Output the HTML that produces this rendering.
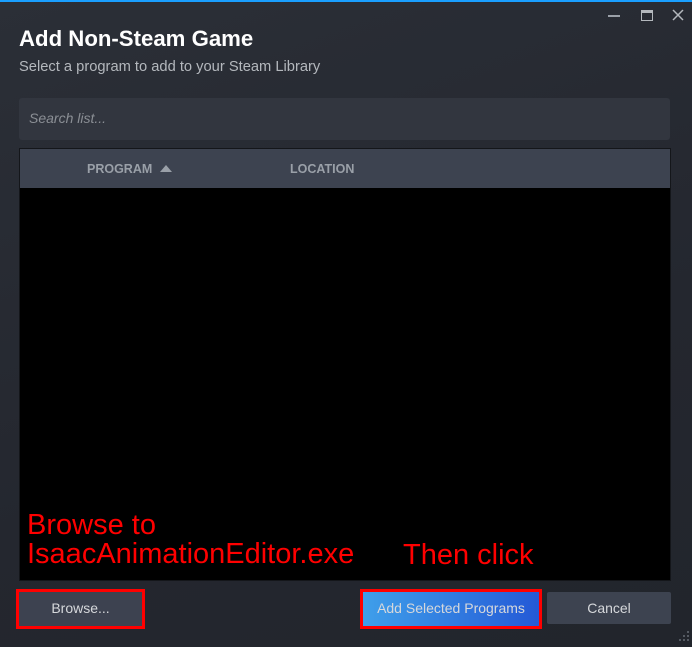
<!DOCTYPE html>
<html><head><meta charset="utf-8"><style>
*{margin:0;padding:0;box-sizing:border-box}
body{width:692px;height:647px;overflow:hidden;background:linear-gradient(160deg,#2b2f37 0%,#24272f 60%,#22252c 100%);font-family:"Liberation Sans",sans-serif;position:relative;color:#fff}
.top{position:absolute;left:0;top:0;width:692px;height:2px;background:#1a9fff}
.abs{position:absolute}
h1{position:absolute;left:19px;top:26px;font-size:22.2px;font-weight:bold;color:#fff;letter-spacing:0}
.sub{left:19px;top:59px;font-size:14.7px;color:#b4b8bd}
.search{left:19px;top:98px;width:651px;height:42px;background:#32363f;border-radius:3px;font-style:italic;color:#8b8f95;font-size:14px;padding:12px 10px}
.table{left:19px;top:148px;width:652px;height:433px;background:#000;border:1px solid #14161a}
.thead{height:39px;background:#3d4350;position:relative;font-size:12.5px;font-weight:bold;color:#9aa0a8}
.red{color:#ff0000;font-family:"Liberation Sans",Arial,sans-serif;font-size:29px;line-height:29px}
.btn{position:absolute;font-size:14px;color:#d6d8db;text-align:center}
</style></head><body>
<div class="top"></div>
<div class="abs" style="left:608px;top:15px;width:12px;height:1.5px;background:#9aa0a8"></div>
<div class="abs" style="left:641px;top:10px;width:12px;height:11px;border:1.5px solid #b4b8bd;border-top-width:3px"></div>
<svg class="abs" style="left:672px;top:9px" width="12" height="12"><path d="M1 1L11 11M11 1L1 11" stroke="#b4b8bd" stroke-width="1.5"/></svg>
<h1>Add Non-Steam Game</h1>
<div class="abs sub">Select a program to add to your Steam Library</div>
<div class="abs search">Search list...</div>
<div class="abs table">
 <div class="thead">
  <span class="abs" style="left:67px;top:13px">PROGRAM</span>
  <svg class="abs" style="left:140px;top:16px" width="12" height="8"><path d="M0 7L6 0L12 7Z" fill="#9aa0a8"/></svg>
  <span class="abs" style="left:270px;top:13px">LOCATION</span>
 </div>
</div>
<div class="abs red" style="left:27px;top:511px">Browse to<br>IsaacAnimationEditor.exe</div>
<div class="abs red" style="left:403px;top:541px">Then click</div>
<div class="btn" style="left:16px;top:589px;width:129px;height:40px;border:3px solid #ff0000;background:#3d4250;padding-top:8px">Browse...</div>
<div class="btn" style="left:360px;top:589px;width:182px;height:40px;border:3px solid #ff0000;background:linear-gradient(90deg,#3f9fea,#2459d6);padding-top:8px">Add Selected Programs</div>
<div class="btn" style="left:547px;top:592px;width:124px;height:32px;background:#3d4350;border-radius:2px;padding-top:8px">Cancel</div>
<svg class="abs" style="left:677px;top:631px" width="14" height="14" fill="#555a62"><rect x="10" y="0" width="2" height="2"/><rect x="6" y="4" width="2" height="2"/><rect x="10" y="4" width="2" height="2"/><rect x="2" y="8" width="2" height="2"/><rect x="6" y="8" width="2" height="2"/><rect x="10" y="8" width="2" height="2"/></svg>
</body></html>
